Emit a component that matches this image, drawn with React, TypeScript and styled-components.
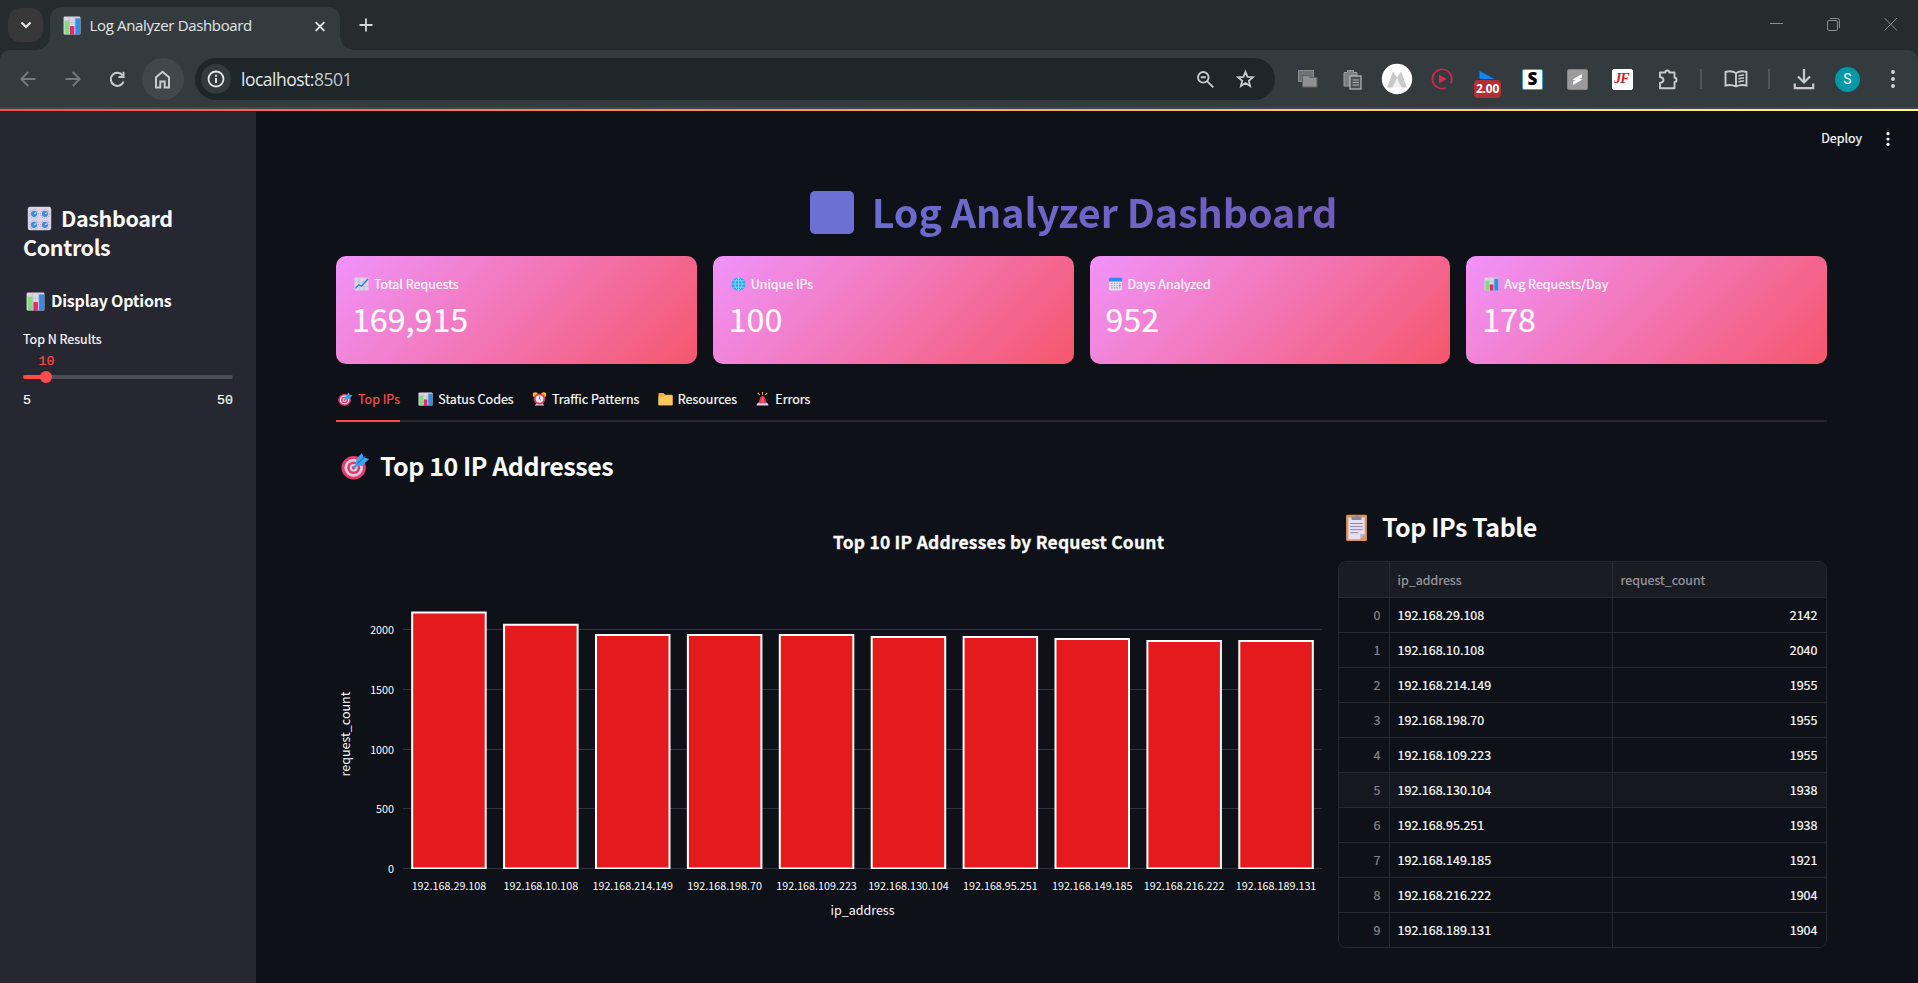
import React from "react";
import styled, { createGlobalStyle } from "styled-components";

const sans = `"Noto Sans CJK SC", "Noto Sans", sans-serif`;
const chrome = `"Open Sans", "Noto Sans", sans-serif`;

const GlobalStyle = createGlobalStyle`
  * { box-sizing: border-box; }
  html, body { margin: 0; background: #0e1117; overflow: hidden; }
  body { font-family: ${sans}; color: #fafafa; }
  svg { display: block; flex: none; }
`;

/* ---------- emoji drawings ---------- */
type EmojiName = "bars" | "knobs" | "line" | "globe" | "calendar" | "target" | "clock" | "folder" | "siren" | "clipboard";

const art: Record<EmojiName, React.ReactNode> = {
  bars: (
    <>
      <rect x="1" y="1" width="30" height="30" rx="2" fill="#ddd3e6" />
      <path d="M1 11h30M1 21h30M11 1v30M21 1v30" stroke="#bfb3cb" strokeWidth="1" />
      <rect x="3" y="8" width="8" height="23" fill="#7fe07a" />
      <rect x="12.5" y="17" width="7.5" height="14" fill="#e8256f" />
      <rect x="22" y="4" width="8.5" height="27" fill="#2f8fe6" />
    </>
  ),
  knobs: (
    <>
      <rect x="1" y="1" width="30" height="30" rx="3" fill="#dcd3ea" />
      {[[9, 10], [23, 10], [9, 24], [23, 24]].map(([x, y]) => (
        <g key={`${x}-${y}`}>
          <circle cx={x} cy={y} r="5.6" fill="none" stroke="#8f86a3" strokeWidth="1" strokeDasharray="1 1.8" />
          <circle cx={x} cy={y} r="4" fill="#3c8ddb" />
          <path d={`M${x} ${y}l3 -1.5`} stroke="#bfe3ff" strokeWidth="1.4" />
        </g>
      ))}
    </>
  ),
  line: (
    <>
      <rect x="1" y="1" width="30" height="30" rx="2" fill="#d9d6e6" />
      <path d="M1 11h30M1 21h30M11 1v30M21 1v30" stroke="#b9b3cb" strokeWidth="1" />
      <path d="M3 26l7-8 6 3L30 4" fill="none" stroke="#2b86d9" strokeWidth="3" />
    </>
  ),
  globe: (
    <>
      <circle cx="16" cy="16" r="15" fill="#35a5ee" />
      <path
        d="M1 16h30M4 8.5h24M4 23.5h24M16 1v30M16 1c-10 8-10 22 0 30M16 1c10 8 10 22 0 30"
        fill="none"
        stroke="#8fe0ff"
        strokeWidth="1.6"
      />
    </>
  ),
  calendar: (
    <>
      <rect x="2" y="1" width="28" height="30" rx="4" fill="#e5dff0" />
      <path d="M2 10V5a4 4 0 0 1 4-4h20a4 4 0 0 1 4 4v5z" fill="#2d8af0" />
      <path d="M8.500 13v15M14 13v15M19.500 13v15M25 13v15" stroke="#a7a1c0" strokeWidth="2.800" strokeDasharray="3 2" />
      <path d="M25 18v3" stroke="#2d8af0" strokeWidth="3.500" />
    </>
  ),
  target: (
    <>
      <circle cx="14" cy="18" r="13.500" fill="#e23c6c" />
      <circle cx="14" cy="18" r="10.300" fill="#dccfe4" />
      <circle cx="14" cy="18" r="7.200" fill="#e23c6c" />
      <circle cx="14" cy="18" r="4.300" fill="#dccfe4" />
      <circle cx="14" cy="18" r="2" fill="#a8576f" />
      <path d="M14 18L22 10" stroke="#3a98e8" strokeWidth="2.400" />
      <path d="M16 15l1-7 6-7 2 5 6 2-8 8z" fill="#3ea2f0" />
      <path d="M18 13l9-8" stroke="#1c6fc4" strokeWidth="1.300" />
    </>
  ),
  clock: (
    <>
      <circle cx="7" cy="6" r="5.500" fill="#f7b52e" />
      <circle cx="25" cy="6" r="5.500" fill="#f7b52e" />
      <path d="M6 31l4-6h12l4 6z" fill="#d9c6e8" />
      <circle cx="16" cy="16" r="12.500" fill="#dd3157" />
      <circle cx="16" cy="16" r="8.300" fill="#efe8f5" />
      <path d="M16 10v6l3 3" fill="none" stroke="#5a4b6e" strokeWidth="1.800" />
    </>
  ),
  folder: (
    <>
      <path d="M1 4a2 2 0 0 1 2-2h9l3 4h14a2 2 0 0 1 2 2v22H1z" fill="#f5b03c" />
      <path d="M1 11h10l4-3h16v20a2 2 0 0 1-2 2H3a2 2 0 0 1-2-2z" fill="#fcc75a" />
    </>
  ),
  siren: (
    <>
      <path d="M16 0v6M6 2l4 5M26 2l-4 5" stroke="#f3b53b" strokeWidth="2.200" />
      <path d="M8 25l3-13q5-6 10 0l3 13z" fill="#ee2f4d" />
      <path d="M13 22l1.500-9h3L19 22z" fill="#fb6476" />
      <path d="M3 31q1-6 5-7h16q4 1 5 7z" fill="#dccfee" />
      <path d="M8 24h16l.5 1.500h-17z" fill="#b61a42" />
    </>
  ),
  clipboard: (
    <>
      <rect x="4.500" y="2" width="23" height="30" rx="1.500" fill="#dd945f" />
      <path d="M7 5h18v19l-5 6H7z" fill="#e6dff2" />
      <path d="M25 24l-5 6v-6z" fill="#bdb2cf" />
      <path d="M9 12h14M9 15.500h14M9 19h14M9 22.500h9" stroke="#8c84a3" strokeWidth="1.100" />
      <path d="M10.500 8V4h3.500q2-4 4 0h3.500v4z" fill="#8d879b" />
    </>
  ),
};

const EmojiBox = styled.span<{ $l?: number; $r?: number; $dy?: number }>`
  display: inline-block;
  vertical-align: middle;
  margin: ${(p) => p.$dy ?? 0}px ${(p) => p.$r ?? 0}px 0 ${(p) => p.$l ?? 0}px;
`;

function Emoji({ name, w, h, l, r, dy }: { name: EmojiName; w: number; h?: number; l?: number; r?: number; dy?: number }) {
  return (
    <EmojiBox $l={l} $r={r} $dy={dy} aria-hidden>
      <svg width={w} height={h ?? w} viewBox="0 0 32 32" preserveAspectRatio="none">
        {art[name]}
      </svg>
    </EmojiBox>
  );
}

/* ---------- browser frame ---------- */
const Window = styled.div`
  width: 1918px;
  height: 983px;
  display: flex;
  flex-direction: column;
  overflow: hidden;
`;

const TabStrip = styled.div`
  height: 50px;
  flex: none;
  display: flex;
  align-items: flex-start;
  padding-left: 8px;
  background: #262b2d;
`;

const TabSearch = styled.div`
  width: 35px;
  height: 34px;
  margin-top: 8px;
  border-radius: 12px;
  background: #383838;
  display: grid;
  place-items: center;
`;

const BrowserTab = styled.div`
  position: relative;
  width: 290px;
  height: 43px;
  margin: 7px 0 0 7px;
  padding: 0 15px 5px 13px;
  border-radius: 12px 12px 0 0;
  background: #343b3e;
  display: flex;
  align-items: center;
  font: 15px/20px ${chrome};
  letter-spacing: -0.35px;
  color: #e3e5e5;
  &::before,
  &::after {
    content: "";
    position: absolute;
    bottom: 0;
    width: 14px;
    height: 14px;
  }
  &::before {
    left: -14px;
    background: radial-gradient(circle at 0 0, transparent 13.5px, #343b3e 14px);
  }
  &::after {
    right: -14px;
    background: radial-gradient(circle at 100% 0, transparent 13.5px, #343b3e 14px);
  }
`;

const TabTitle = styled.span`
  flex: 1;
  padding: 0 0 2px 8.5px;
  white-space: nowrap;
`;

const NewTab = styled.div`
  margin: 18px 0 0 19px;
`;

const WindowControls = styled.div`
  margin: 17px 20px 0 auto;
  display: flex;
  gap: 43px;
`;

const ToolbarBack = styled.div`
  flex: none;
  background: #262b2d;
`;

const Toolbar = styled.div`
  height: 59px;
  padding-bottom: 1px;
  display: flex;
  align-items: center;
  background: linear-gradient(#343b3e 0 57px, #41484b 57px);
  border-radius: 10px 10px 0 0;
`;

const NavButtons = styled.div`
  width: 195px;
  display: flex;
  align-items: center;
  padding-left: 15.5px;
`;

const NavButton = styled.div<{ $ml?: number; $round?: boolean }>`
  width: ${(p) => (p.$round ? 42 : 24)}px;
  height: ${(p) => (p.$round ? 42 : 24)}px;
  margin-left: ${(p) => p.$ml ?? 0}px;
  border-radius: 50%;
  background: ${(p) => (p.$round ? "#41484b" : "transparent")};
  display: grid;
  place-items: center;
`;

const Omnibox = styled.div`
  width: 1080px;
  height: 42px;
  padding: 0 19px 0 6px;
  border-radius: 21px;
  background: #1f2629;
  display: flex;
  align-items: center;
`;

const SiteInfo = styled.div`
  width: 30px;
  height: 30px;
  border-radius: 50%;
  background: #343b3e;
  display: grid;
  place-items: center;
`;

const Url = styled.span`
  flex: 1;
  padding: 0 0 1px 10px;
  font: 17.5px/24px ${chrome};
  letter-spacing: -0.5px;
  color: #e6e8e8;
  span { color: #c3c8c9; }
`;

const Extensions = styled.div`
  flex: 1;
  display: flex;
  align-items: center;
  padding-left: 22px;
`;

const Slot = styled.div<{ $w: number }>`
  width: ${(p) => p.$w}px;
  flex: none;
  height: 42px;
  display: flex;
  align-items: center;
  justify-content: center;
`;

const SpeedIcon = styled.div`
  position: relative;
  width: 27px;
  height: 28px;
  margin-top: 10px;
`;

const SpeedBadge = styled.span`
  position: absolute;
  left: 0;
  top: 10px;
  width: 27px;
  height: 18px;
  border-radius: 4px;
  background: #b03033;
  color: #fff;
  font: 700 12px/18px ${chrome};
  letter-spacing: -0.2px;
  text-align: center;
`;

const Tile = styled.div<{ $bg: string; $edge: string; $fg: string }>`
  width: 21px;
  height: 21px;
  border: 1px solid ${(p) => p.$edge};
  border-radius: 2px;
  background: ${(p) => p.$bg};
  color: ${(p) => p.$fg};
  font: 800 17px/18px ${chrome};
  text-align: center;
`;

const JfMark = styled.span`
  display: block;
  margin-left: -2px;
  font: italic 700 14px/18px "Liberation Serif", serif;
  letter-spacing: -1px;
`;

const Divider = styled.div`
  width: 2px;
  height: 20px;
  background: #50575a;
`;

const Avatar = styled.div`
  width: 25px;
  height: 25px;
  border-radius: 50%;
  background: #0097a7;
  color: #fff;
  font: 14px/25px Roboto, sans-serif;
  text-align: center;
`;

/* ---------- streamlit page ---------- */
const Decoration = styled.div`
  height: 2px;
  flex: none;
  background: linear-gradient(90deg, #ff4b4b, #fffd80);
`;

const Page = styled.div`
  flex: 1;
  min-height: 0;
  display: flex;
  -webkit-text-stroke: 0.2px currentColor;
`;

const Sidebar = styled.aside`
  width: 256px;
  flex: none;
  padding: 92px 23px 0;
  background: #262730;
`;

const SidebarTitle = styled.h2`
  margin: 0 0 27px;
  font-size: 21.5px;
  line-height: 29px;
  font-weight: 700;
  letter-spacing: -0.38px;
  -webkit-text-stroke: 0;
`;

const SidebarSubtitle = styled.h3`
  margin: 0 0 17px;
  font-size: 16px;
  line-height: 24px;
  font-weight: 700;
  letter-spacing: -0.22px;
  white-space: nowrap;
  -webkit-text-stroke: 0;
`;

const SliderLabel = styled.div`
  font-size: 12.5px;
  line-height: 20px;
`;

const SliderValue = styled.div`
  width: 47px;
  margin-top: 5px;
  font: 13.300px/16px "Liberation Mono", monospace;
  color: #ff4b4b;
  text-align: center;
`;

const Track = styled.div`
  height: 4px;
  margin: 5px 0 14px;
  border-radius: 4px;
  background: linear-gradient(90deg, #ff4b4b 11.1%, #4c4d57 11.1%);
  display: flex;
  align-items: center;
`;

const Thumb = styled.div`
  width: 12px;
  height: 12px;
  margin-left: 17px;
  border-radius: 50%;
  background: #ff4b4b;
`;

const Range = styled.div`
  display: flex;
  justify-content: space-between;
  font: 13.300px/16px "Liberation Mono", monospace;
`;

const Main = styled.main`
  flex: 1;
  padding: 0 91px 0 80px;
`;

const AppHeader = styled.div`
  height: 74px;
  margin-right: -63px;
  padding-top: 17px;
  display: flex;
  justify-content: flex-end;
  gap: 24px;
  font-size: 12.5px;
  line-height: 20px;
`;

const Title = styled.h1`
  margin: 0 0 19px;
  height: 52px;
  display: flex;
  align-items: center;
  justify-content: center;
  padding-right: 8px;
  font-size: 39.4px;
  line-height: 52px;
  font-weight: 700;
  letter-spacing: -0.04px;
  white-space: nowrap;
  background: linear-gradient(90deg, #667eea 0%, #764ba2 100%);
  -webkit-background-clip: text;
  background-clip: text;
  color: transparent;
  -webkit-text-stroke: 0;
`;

const TitleBlock = styled.span`
  width: 44px;
  height: 43px;
  margin: 3px 18px 0 -8px;
  border-radius: 5px;
  background: #6c70d4;
`;

const Metrics = styled.div`
  display: grid;
  grid-template-columns: repeat(4, 1fr);
  gap: 16px;
`;

const Metric = styled.div`
  height: 108px;
  padding: 18px 16px;
  border-radius: 10px;
  background: linear-gradient(135deg, #f093fb 0%, #f5576c 100%);
`;

const MetricLabel = styled.div`
  padding-left: 1px;
  font-size: 12.5px;
  line-height: 20px;
`;

const MetricValue = styled.div`
  margin-top: 4px;
  font-size: 32.2px;
  line-height: 40px;
`;

const Tabs = styled.div`
  height: 33px;
  margin: 25px 0 26px;
  display: flex;
  gap: 16.3px;
  box-shadow: inset 0 -2px #26282e;
`;

const Tab = styled.div<{ $active?: boolean }>`
  border-bottom: 2px solid ${(p) => (p.$active ? "#ff4b4b" : "transparent")};
  color: ${(p) => (p.$active ? "#ff4b4b" : "#fafafa")};
  font-size: 12.5px;
  line-height: 20px;
  white-space: nowrap;
`;

const Heading = styled.h2<{ $top?: number }>`
  margin: ${(p) => p.$top ?? 0}px 0 0;
  font-size: 25px;
  line-height: 34px;
  font-weight: 700;
  letter-spacing: -0.45px;
  white-space: nowrap;
  -webkit-text-stroke: 0;
`;

const Columns = styled.div`
  display: flex;
  gap: 16px;
  margin-top: 16px;
`;

const TableColumn = styled.div`
  width: 489px;
`;

const Table = styled.div`
  margin-top: 18px;
  border: 1px solid #26292f;
  border-radius: 8px;
  overflow: hidden;
  font-size: 12.5px;
`;

const Row = styled.div<{ $head?: boolean; $hover?: boolean }>`
  display: grid;
  grid-template-columns: 51px 223px 1fr;
  height: ${(p) => (p.$head ? 36 : 35)}px;
  line-height: ${(p) => (p.$head ? 35 : 34)}px;
  background: ${(p) => (p.$head ? "#1a1c24" : p.$hover ? "#16181f" : "#0e1117")};
  color: ${(p) => (p.$head ? "#9a9b9f" : "#fafafa")};
  border-bottom: 1px solid #282a30;
  &:last-child { height: 34px; border-bottom: 0; }
`;

const Cell = styled.div<{ $right?: boolean; $dim?: boolean; $last?: boolean }>`
  padding: 0 8.5px 0 7.5px;
  text-align: ${(p) => (p.$right ? "right" : "left")};
  color: ${(p) => (p.$dim ? "#84868b" : "inherit")};
  border-right: ${(p) => (p.$last ? 0 : 1)}px solid #282a30;
`;

const data: [string, number][] = [
  ["192.168.29.108", 2142],
  ["192.168.10.108", 2040],
  ["192.168.214.149", 1955],
  ["192.168.198.70", 1955],
  ["192.168.109.223", 1955],
  ["192.168.130.104", 1938],
  ["192.168.95.251", 1938],
  ["192.168.149.185", 1921],
  ["192.168.216.222", 1904],
  ["192.168.189.131", 1904],
];

const metrics: [EmojiName, string, string][] = [
  ["line", "Total Requests", "169,915"],
  ["globe", "Unique IPs", "100"],
  ["calendar", "Days Analyzed", "952"],
  ["bars", "Avg Requests/Day", "178"],
];

const tabs: [EmojiName, string][] = [
  ["target", "Top IPs"],
  ["bars", "Status Codes"],
  ["clock", "Traffic Patterns"],
  ["folder", "Resources"],
  ["siren", "Errors"],
];

const PLOT = { x0: 67, x1: 986, zero: 370.5, unit: 0.1195 };

const ChartTitle = styled.text`
  font-size: 17.4px;
  font-weight: 700;
  text-anchor: middle;
  stroke: #fafafa;
  stroke-width: 0.3px;
`;

function Chart() {
  const pitch = (PLOT.x1 - PLOT.x0) / data.length;
  return (
    <svg width="986" height="450" viewBox="0 0 986 450" fontFamily={sans} fill="#fafafa">
      <ChartTitle x="662.5" y="51" textLength="331">
        Top 10 IP Addresses by Request Count
      </ChartTitle>
      {[0, 500, 1000, 1500, 2000].map((v) => {
        const y = PLOT.zero - v * PLOT.unit;
        return (
          <g key={v}>
            <path d={`M${PLOT.x0} ${Math.floor(y) + 0.5}H${PLOT.x1}`} stroke="#31333f" />
            <text x="58" y={y + 4.5} fontSize="10.750" textAnchor="end">
              {v}
            </text>
          </g>
        );
      })}
      {data.map(([ip, n], i) => {
        const cx = PLOT.x0 + pitch * (i + 0.5);
        const h = n * PLOT.unit;
        return (
          <g key={ip}>
            <path
              d={`M${cx - pitch * 0.4} ${PLOT.zero}v${-h}h${pitch * 0.8}v${h}z`}
              fill="#e41a1c"
              stroke="#fff"
              strokeWidth="2"
              clipPath="url(#plot)"
            />
            <text x={cx} y="392" fontSize="10.750" textAnchor="middle">
              {ip}
            </text>
          </g>
        );
      })}
      <clipPath id="plot">
        <rect x="67" y="0" width="919" height="371" />
      </clipPath>
      <text x="526.500" y="417" fontSize="12.500" textAnchor="middle">
        ip_address
      </text>
      <text transform="translate(14 236) rotate(-90)" fontSize="12.500" textAnchor="middle">
        request_count
      </text>
    </svg>
  );
}

const stroke = (color: string, w = 2) => ({ fill: "none", stroke: color, strokeWidth: w });

function BrowserChrome() {
  return (
    <>
      <TabStrip>
        <TabSearch>
          <svg width="12" height="8" viewBox="0 0 12 8"><path d="M1.500 1.500L6 6l4.500-4.500" {...stroke("#e3e5e5", 2.200)} /></svg>
        </TabSearch>
        <BrowserTab>
          <Emoji name="bars" w={18} h={19} dy={-1} />
          <TabTitle>Log Analyzer Dashboard</TabTitle>
          <svg width="10" height="11" viewBox="0 0 10 11"><path d="M.7 1.200l8.600 8.600M9.300 1.200L.7 9.800" {...stroke("#e3e5e5", 1.900)} /></svg>
        </BrowserTab>
        <NewTab>
          <svg width="14" height="14" viewBox="0 0 14 14"><path d="M7 .5v13M.5 7h13" {...stroke("#d5d8d9", 1.800)} /></svg>
        </NewTab>
        <WindowControls>
          <svg width="14" height="14" viewBox="0 0 14 14"><path d="M0 6.500h13" {...stroke("#8b8e8f", 1)} /></svg>
          <svg width="14" height="14" viewBox="0 0 14 14">
            <rect x=".5" y="3.500" width="10" height="10" rx="1.500" {...stroke("#8b8e8f", 1)} />
            <path d="M3 1.500h7.500a2 2 0 0 1 2 2V11" {...stroke("#8b8e8f", 1)} />
          </svg>
          <svg width="14" height="14" viewBox="0 0 14 14"><path d="M.5 1l12.500 12.500M13 1L.5 13.500" {...stroke("#8b8e8f", 1)} /></svg>
        </WindowControls>
      </TabStrip>
      <ToolbarBack>
        <Toolbar>
          <NavButtons>
            <NavButton>
              <svg width="16" height="16" viewBox="0 0 16 16"><path d="M15.500 8H1.500M8.200 1L1.300 8l6.900 7" {...stroke("#747b7d", 1.900)} /></svg>
            </NavButton>
            <NavButton $ml={21}>
              <svg width="16" height="16" viewBox="0 0 16 16"><path d="M.5 8h14M7.800 1l6.900 7-6.900 7" {...stroke("#747b7d", 1.900)} /></svg>
            </NavButton>
            <NavButton $ml={21}>
              <svg width="17" height="17" viewBox="0 0 17 17">
                <path d="M14.600 10.500A6.600 6.600 0 1 1 13.700 4.400" {...stroke("#c7cbcc")} />
                <path d="M15.500 .8v6.100H9.500V5h4.100V.8z" fill="#c7cbcc" />
              </svg>
            </NavButton>
            <NavButton $ml={12} $round>
              <svg width="17" height="19" viewBox="0 0 17 19">
                <path d="M2 17.600V7.200l6.500-5.500 6.500 5.500v10.400h-4.300v-6H6.300v6z" {...stroke("#c7cbcc")} />
              </svg>
            </NavButton>
          </NavButtons>
          <Omnibox>
            <SiteInfo>
              <svg width="18" height="18" viewBox="0 0 18 18">
                <circle cx="9" cy="9" r="7.500" {...stroke("#e3e5e5", 1.800)} />
                <path d="M9 8v5M9 4.800v1.900" {...stroke("#e3e5e5", 1.900)} />
              </svg>
            </SiteInfo>
            <Url>localhost:<span>8501</span></Url>
            <svg width="19" height="19" viewBox="0 0 19 19">
              <circle cx="7.300" cy="7.300" r="5.300" {...stroke("#c7cbcc", 1.900)} />
              <path d="M11.300 11.300l6 6M4.800 7.300h5" {...stroke("#c7cbcc", 1.900)} />
            </svg>
            <Slot $w={20} />
            <svg width="21" height="20" viewBox="0 0 21 20">
              <path d="M10.500 2.800l2 5 5.400.4-4.100 3.500 1.300 5.300-4.600-2.900-4.600 2.900 1.300-5.300L3.100 8.200l5.400-.4z" {...stroke("#c7cbcc", 1.800)} />
            </svg>
          </Omnibox>
          <Extensions>
            <Slot $w={21}>
              <svg width="20" height="18" viewBox="0 0 20 18">
                <rect x=".5" y=".5" width="15" height="11" fill="#6f7273" stroke="#8b8d8e" />
                <path d="M4.500 5.500h6l1.500 2h7v9.500h-14.500z" fill="#8e9091" stroke="#5e6263" />
              </svg>
            </Slot>
            <Slot $w={24} />
            <Slot $w={21}>
              <svg width="19" height="21" viewBox="0 0 19 21">
                <path d="M1 3.500h3.500v-2h6v2H14V7H7v10H1z" fill="#7c8081" stroke="#9a9d9e" />
                <rect x="7" y="7" width="11" height="13" fill="#4b5052" stroke="#b0b3b4" strokeWidth="1.300" />
                <path d="M9.500 11h6.500M9.500 13.500h6.500M9.500 16h6.500" stroke="#b0b3b4" strokeWidth="1.200" />
              </svg>
            </Slot>
            <Slot $w={18} />
            <Slot $w={32}>
              <svg width="32" height="32" viewBox="0 0 32 32">
                <circle cx="16" cy="16" r="15.200" fill="#fff" />
                <path d="M16 12l5 12.500H11z" fill="#f1f1f1" />
                <path d="M6 24.500L12 8.500l4 6-4.500 10z" fill="#c9c9c9" />
                <path d="M26 24.500L20 8.500l-4 6 4.500 10z" fill="#c9c9c9" />
              </svg>
            </Slot>
            <Slot $w={18} />
            <Slot $w={22}>
              <svg width="22" height="22" viewBox="0 0 22 22">
                <path d="M19.500 15.500A9.600 9.600 0 1 0 15 19.700" {...stroke("#d52450", 1.700)} />
                <path d="M8 6.500l7.500 4.500L8 15.500z" fill="#e0264f" />
              </svg>
            </Slot>
            <Slot $w={21} />
            <SpeedIcon>
              <svg width="27" height="14" viewBox="0 0 27 14"><path d="M5.500 1l15 8h-15z" fill="#0a84ff" /></svg>
              <SpeedBadge>2.00</SpeedBadge>
            </SpeedIcon>
            <Slot $w={21} />
            <Tile $bg="#fff" $edge="#3ba0c4" $fg="#000">S</Tile>
            <Slot $w={24} />
            <Tile $bg="#9b9b9b" $edge="#858585" $fg="#fff">
              <svg width="19" height="19" viewBox="0 0 19 19"><path d="M4.500 9.500L14 4v3.500L8 10.500zM14.500 9.500L5 15v-3.500L11 8.500z" fill="#fff" /></svg>
            </Tile>
            <Slot $w={24} />
            <Tile $bg="#fff" $edge="#fff" $fg="#d3201f"><JfMark>JF</JfMark></Tile>
            <Slot $w={24} />
            <svg width="23" height="23" viewBox="0 0 23 23">
              <path d="M3 4.500h5.300a2 2 0 0 1 4 0h5.200v5.300a2 2 0 0 1 0 4.200v6.300H3v-5.300q3.500-.6 3.500-3T3 9z" {...stroke("#c7cbcc", 1.900)} strokeLinejoin="round" />
            </svg>
            <Slot $w={20} />
            <Divider />
            <Slot $w={22} />
            <svg width="24" height="20" viewBox="0 0 24 20">
              <path d="M12 4Q7 1 1.500 3v13.500Q7 15 12 17.500 17 15 22.500 16.500V3Q17 1 12 4zv13.500" {...stroke("#c7cbcc", 1.900)} />
              <path d="M14.500 7q2.500-1.200 5.500-1M14.500 10q2.500-1.200 5.500-1M14.500 13q2.500-1.200 5.500-1" {...stroke("#c7cbcc", 1.500)} />
            </svg>
            <Slot $w={20} />
            <Divider />
            <Slot $w={23} />
            <svg width="22" height="22" viewBox="0 0 22 22">
              <path d="M11 1v13M5 8.500l6 6 6-6M1.800 15.500v4.700h18.400v-4.700" {...stroke("#c7cbcc", 2.200)} />
            </svg>
            <Slot $w={20} />
            <Avatar>S</Avatar>
            <Slot $w={31} />
            <svg width="4" height="18" viewBox="0 0 4 18" fill="#d5d8d9">
              <circle cx="2" cy="2" r="1.900" /><circle cx="2" cy="9" r="1.900" /><circle cx="2" cy="16" r="1.900" />
            </svg>
          </Extensions>
        </Toolbar>
      </ToolbarBack>
    </>
  );
}

export default function App() {
  return (
    <Window>
      <GlobalStyle />
      <BrowserChrome />
      <Decoration />
      <Page>
        <Sidebar>
          <SidebarTitle>
            <Emoji name="knobs" w={25} l={4} r={9} dy={-5} />
            Dashboard Controls
          </SidebarTitle>
          <SidebarSubtitle>
            <Emoji name="bars" w={19} l={2.500} r={6.500} dy={-3} />
            Display Options
          </SidebarSubtitle>
          <SliderLabel>Top N Results</SliderLabel>
          <SliderValue>10</SliderValue>
          <Track><Thumb /></Track>
          <Range><span>5</span><span>50</span></Range>
        </Sidebar>
        <Main>
          <AppHeader>
            <span>Deploy</span>
            <svg width="4" height="20" viewBox="0 0 4 20" fill="#fafafa">
              <circle cx="2" cy="5.700" r="1.600" /><circle cx="2" cy="11" r="1.600" /><circle cx="2" cy="16.300" r="1.600" />
            </svg>
          </AppHeader>
          <Title><TitleBlock />Log Analyzer Dashboard</Title>
          <Metrics>
            {metrics.map(([icon, label, value]) => (
              <Metric key={label}>
                <MetricLabel><Emoji name={icon} w={15} h={14} l={1} r={5} dy={-3} />{label}</MetricLabel>
                <MetricValue>{value}</MetricValue>
              </Metric>
            ))}
          </Metrics>
          <Tabs>
            {tabs.map(([icon, label], i) => (
              <Tab key={label} $active={i === 0}>
                <Emoji name={icon} w={15} h={14} l={2} r={5} dy={-3} />{label}
              </Tab>
            ))}
          </Tabs>
          <Heading><Emoji name="target" w={29} h={28} l={5} r={10} dy={-6} />Top 10 IP Addresses</Heading>
          <Columns>
            <Chart />
            <TableColumn>
              <Heading $top={11}><Emoji name="clipboard" w={29} h={28} l={4} r={11} dy={-6} />Top IPs Table</Heading>
              <Table>
                <Row $head>
                  <Cell /><Cell>ip_address</Cell><Cell $last>request_count</Cell>
                </Row>
                {data.map(([ip, n], i) => (
                  <Row key={ip} $hover={i === 5}>
                    <Cell $right $dim>{i}</Cell>
                    <Cell>{ip}</Cell>
                    <Cell $right $last>{n}</Cell>
                  </Row>
                ))}
              </Table>
            </TableColumn>
          </Columns>
        </Main>
      </Page>
    </Window>
  );
}
